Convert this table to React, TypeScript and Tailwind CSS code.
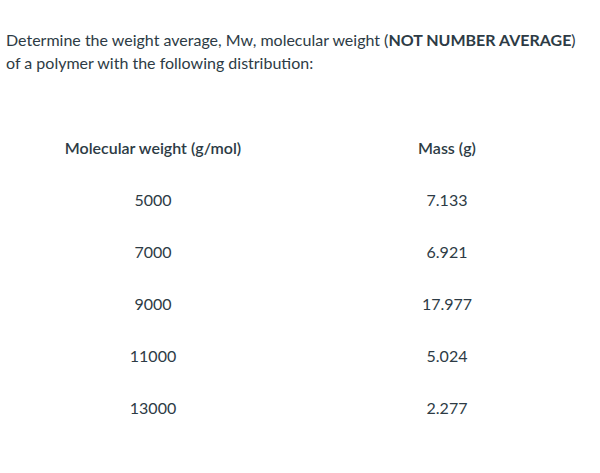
const rows = [
  { mw: '5000', mass: '7.133' },
  { mw: '7000', mass: '6.921' },
  { mw: '9000', mass: '17.977' },
  { mw: '11000', mass: '5.024' },
  { mw: '13000', mass: '2.277' },
]

export default function App() {
  return (
    <div className="h-[473px] w-[600px] bg-white pl-[6px] pt-[28px] font-['Lato',sans-serif] text-[#2d3b45]">
      <p className="text-[16px] leading-[23px]">
        Determine the weight average, Mw, molecular weight (<strong className="font-bold">NOT NUMBER AVERAGE</strong>)
        <br />
        of a polymer with the following distribution:
      </p>

      <div className="mt-[61px] grid grid-cols-[202px_200px] gap-x-[93px] pl-[46px] text-[16px]">
        <div className="flex h-[26px] items-center justify-center font-semibold">Molecular weight (g/mol)</div>
        <div className="flex h-[26px] items-center justify-center font-semibold">Mass (g)</div>
        {rows.map((r) => (
          <div key={r.mw} className="contents">
            <div className="mt-[26px] flex h-[26px] items-center justify-center">{r.mw}</div>
            <div className="mt-[26px] flex h-[26px] items-center justify-center">{r.mass}</div>
          </div>
        ))}
      </div>
    </div>
  )
}
